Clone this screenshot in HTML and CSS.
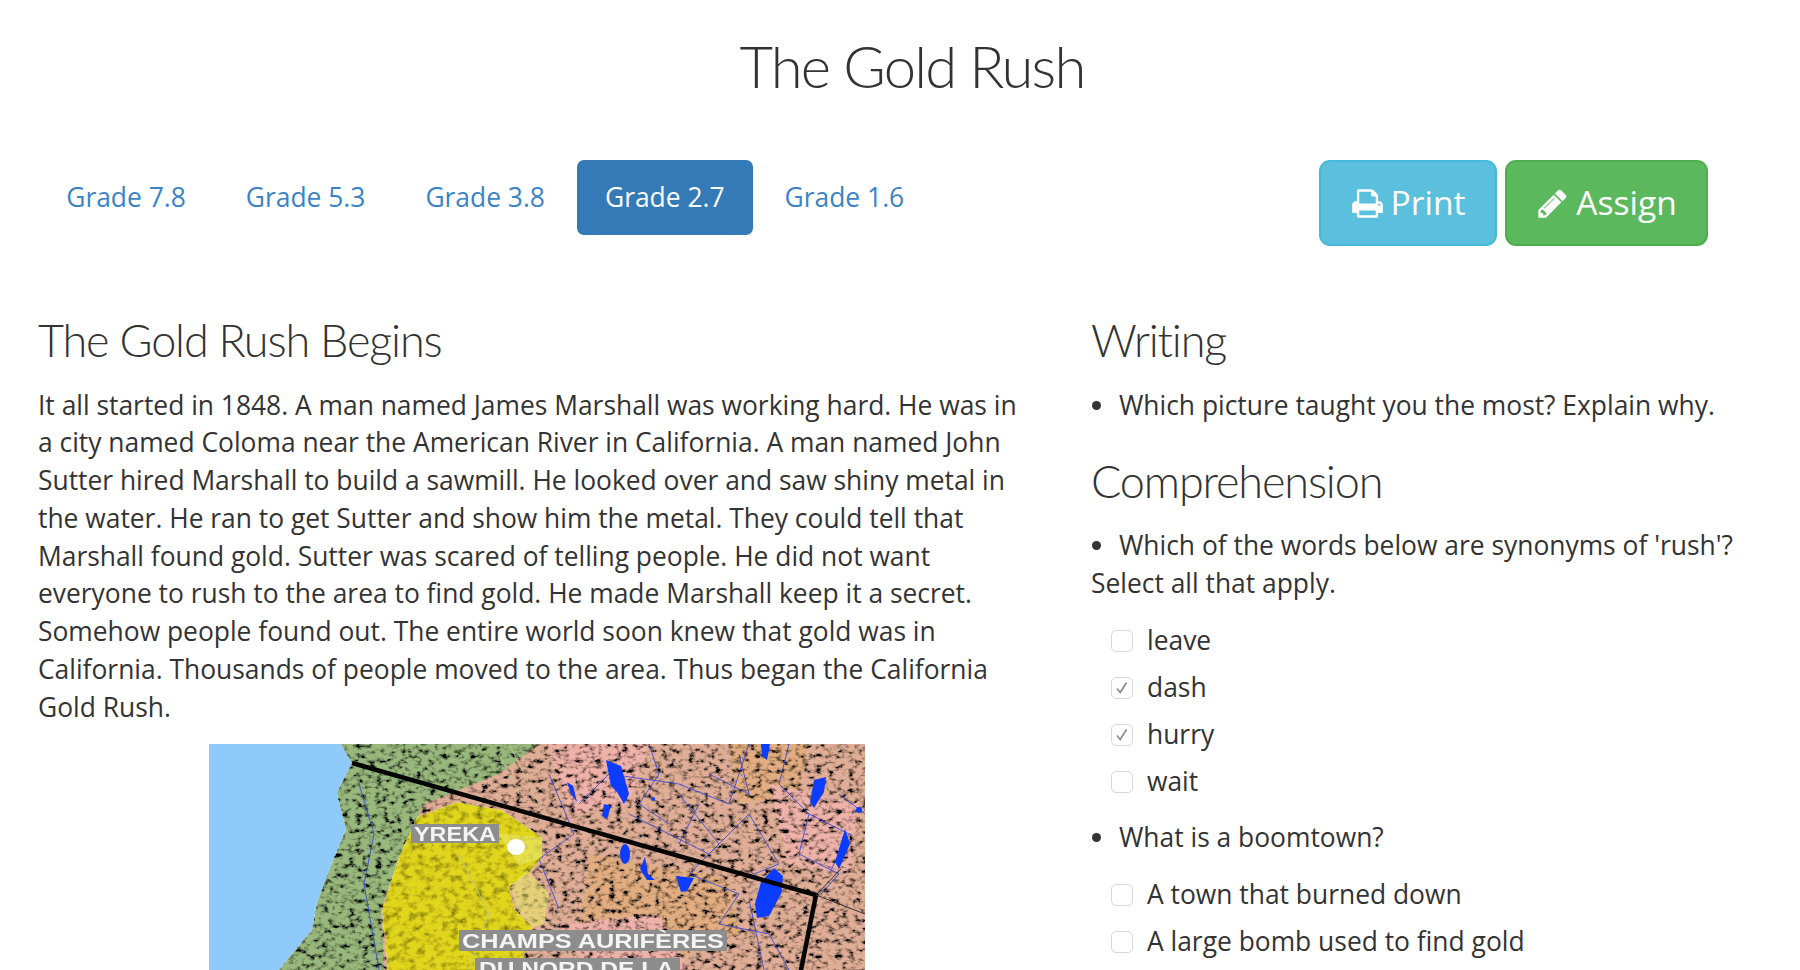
FILE: index.html
```html
<!DOCTYPE html>
<html lang="en">
<head>
<meta charset="utf-8">
<title>The Gold Rush</title>
<link rel="stylesheet" href="styles.css">
</head>
<body>
<div class="page">
  <h1 class="title">The Gold Rush</h1>
  <div class="toolbar">
    <nav class="pills">
      <a class="pill">Grade 7.8</a>
      <a class="pill">Grade 5.3</a>
      <a class="pill">Grade 3.8</a>
      <a class="pill active">Grade 2.7</a>
      <a class="pill">Grade 1.6</a>
    </nav>
    <div class="actions">
      <a class="btn btn-print"><svg class="icon" viewBox="0 0 1792 1792"><path fill="currentColor" d="M448 1536h896v-256h-896v256zm0-640h896v-384h-160q-40 0-68-28t-28-68v-160h-640v640zm1152 64q0-26-19-45t-45-19-45 19-19 45 19 45 45 19 45-19 19-45zm128 0v416q0 13-9.5 22.5t-22.5 9.5h-224v160q0 40-28 68t-68 28h-960q-40 0-68-28t-28-68v-160h-224q-13 0-22.5-9.5t-9.5-22.5v-416q0-79 56.5-135.5t135.5-56.5h64v-544q0-40 28-68t68-28h672q40 0 88 20t76 48l152 152q28 28 48 76t20 88v256h64q79 0 135.5 56.5t56.5 135.5z"/></svg>Print</a>
      <a class="btn btn-assign"><svg class="icon" viewBox="0 0 1792 1792"><path fill="currentColor" d="M491 1536l91-91-235-235-91 91v107h128v128h107zm523-928q0-22-22-22-10 0-17 7l-542 542q-7 7-7 17 0 22 22 22 10 0 17-7l542-542q7-7 7-17zm-54-192l416 416-832 832h-416v-416zm683 96q0 53-37 90l-166 166-416-416 166-165q36-38 90-38 53 0 91 38l235 234q37 39 37 91z"/></svg>Assign</a>
    </div>
  </div>
  <main class="columns">
    <section class="story">
      <h2>The Gold Rush Begins</h2>
      <p>It all started in 1848. A man named James Marshall was working hard. He was in a city named Coloma near the American River in California. A man named John Sutter hired Marshall to build a sawmill. He looked over and saw shiny metal in the water. He ran to get Sutter and show him the metal. They could tell that Marshall found gold. Sutter was scared of telling people. He did not want everyone to rush to the area to find gold. He made Marshall keep it a secret. Somehow people found out. The entire world soon knew that gold was in California. Thousands of people moved to the area. Thus began the California Gold Rush.</p>
      <svg class="map" viewBox="0 0 656 300" role="img" aria-label="Map of the northern California gold fields">
        <defs>
          <filter id="relief" x="0" y="0" width="100%" height="100%">
            <feTurbulence type="fractalNoise" baseFrequency="0.15 0.2" numOctaves="3" seed="11" result="n"/>
            <feColorMatrix in="n" type="matrix" values="3.4 0 0 0 -0.85  3.4 0 0 0 -0.85  3.4 0 0 0 -0.85  0 0 0 0 1" result="g"/>
            <feBlend in="SourceGraphic" in2="g" mode="multiply" result="m"/>
            <feComposite in="m" in2="SourceGraphic" operator="in"/>
          </filter>
          <filter id="goldtex" x="0" y="0" width="100%" height="100%">
            <feTurbulence type="fractalNoise" baseFrequency="0.12 0.16" numOctaves="3" seed="4" result="n"/>
            <feColorMatrix in="n" type="matrix" values="1.8 0 0 0 0  1.8 0 0 0 0  1.8 0 0 0 0  0 0 0 0 1" result="g"/>
            <feBlend in="SourceGraphic" in2="g" mode="multiply" result="m"/>
            <feComposite in="m" in2="SourceGraphic" operator="in"/>
          </filter>
          <filter id="softer" x="-5%" y="-5%" width="110%" height="110%"><feGaussianBlur stdDeviation="0.4"/></filter>
        </defs>
        <rect class="sea" width="656" height="300"/>
        <g filter="url(#relief)">
          <path class="land" d="M132 0L143 19L128 49L137 86L123 119L108 159L103 186L70 226L50 300H656V0Z"/>
          <path class="land-green" d="M132 0L143 19L128 49L137 86L123 119L108 159L103 186L70 226L50 300H180L172 166L190 113L215 60L290 30L330 0Z"/>
          <path class="land-sand" d="M380 110L520 135L530 190L440 226L370 200Z"/>
          <path class="land-sand" d="M520 0L600 0L590 50L530 60Z"/>
          <path class="land-pink" d="M340 0H440L420 60L360 70Z"/>
          <path class="land-pink" d="M560 40L650 60L640 130L580 120Z"/>
          <path class="land-pink" d="M350 180L450 170L480 226L380 226Z"/>
        </g>
        <g filter="url(#goldtex)">
          <path class="gold" d="M248 58L293 66L333 93L333 113L320 129L300 143L306 166L324 183L310 226V300H186L173 166L190 113L208 73Z"/>
        </g>
        <path class="gold-light" d="M318 126L340 150L335 180L324 183L308 166L302 143Z"/>
        <path class="gold-light" d="M290 90L333 93L333 113L310 122Z"/>
        <g class="rivers" filter="url(#softer)">
          <path d="M150 40L165 90L155 140L170 226"/>
          <path d="M370 60L400 30L470 40L520 60L540 0"/>
          <path d="M340 30L365 90L330 115L350 165"/>
          <path d="M470 50L510 100L480 130L530 150L510 180L560 190"/>
          <path d="M420 70L470 95L500 110L540 70L570 120L545 130"/>
          <path d="M580 0L570 40L600 70L590 110L630 130L612 150"/>
          <path d="M630 50L656 70M600 70L640 90L620 130"/>
          <path d="M560 190L580 226M540 155L555 226"/>
          <path d="M500 30L540 50L530 10M490 60L470 100"/>
          <path d="M440 0L450 30L430 60L460 80"/>
        </g>
        <path class="river-pale" d="M250 110L280 170L260 226M300 0L330 60M290 10L310 50"/>
        <g class="lakes">
          <path d="M397 16L412 22L420 50L415 60L408 48L402 42Z"/>
          <path d="M601 58L605 36L617 33L615 48L605 64Z"/>
          <ellipse cx="416" cy="110" rx="5" ry="10"/>
          <path d="M431 125L436 113L439 130L446 136L438 136Z"/>
          <path d="M467 132L485 134L478 147L472 148Z"/>
          <path d="M546 160L552 138L565 124L574 132L572 150L560 172L548 174Z"/>
          <path d="M552 0H561L558 16L553 12Z"/>
          <path d="M636 85L641 100L630 125L626 118Z"/>
          <circle cx="650" cy="66" r="3"/>
          <circle cx="444" cy="55" r="2"/>
          <path d="M358 38L364 42L368 58L362 50Z"/>
          <path d="M395 60L402 62L398 75L393 72Z"/>
        </g>
        <path class="border" d="M143 19L607 151L592 226L580 300"/>
        <path class="border-thin" d="M607 151L656 170M607 151L632 125"/>
        <ellipse class="dot" cx="307" cy="103" rx="9" ry="8"/>
        <rect class="label-bg" x="202" y="80" width="88" height="19"/>
        <text class="map-label" x="205" y="97" textLength="82" lengthAdjust="spacingAndGlyphs">YREKA</text>
        <rect class="label-bg" x="250" y="186" width="268" height="21"/>
        <text class="map-label" x="253" y="204" textLength="262" lengthAdjust="spacingAndGlyphs">CHAMPS AURIFÈRES</text>
        <rect class="label-bg" x="266" y="214" width="205" height="21"/>
        <text class="map-label" x="270" y="232" textLength="195" lengthAdjust="spacingAndGlyphs">DU NORD DE LA</text>
      </svg>
    </section>
    <aside class="questions">
      <h2>Writing</h2>
      <ul class="prompt"><li>Which picture taught you the most? Explain why.</li></ul>
      <h2>Comprehension</h2>
      <ul class="prompt"><li>Which of the words below are synonyms of 'rush'? Select all that apply.</li></ul>
      <div class="options">
        <label class="option"><span class="box"></span>leave</label>
        <label class="option"><span class="box"><svg class="tick" viewBox="0 0 22 22"><path d="M5.5 11.5L9 16L16 5"/></svg></span>dash</label>
        <label class="option"><span class="box"><svg class="tick" viewBox="0 0 22 22"><path d="M5.5 11.5L9 16L16 5"/></svg></span>hurry</label>
        <label class="option"><span class="box"></span>wait</label>
      </div>
      <ul class="prompt"><li>What is a boomtown?</li></ul>
      <div class="options">
        <label class="option"><span class="box"></span>A town that burned down</label>
        <label class="option"><span class="box"></span>A large bomb used to find gold</label>
      </div>
    </aside>
  </main>
</div>
</body>
</html>
```
FILE: styles.css
```css
* { box-sizing: border-box; }
html, body { margin: 0; padding: 0; background: #fff; }
body {
  height: 970px;
  overflow: hidden;
  font-family: "Open Sans", sans-serif;
  font-size: 26.4px;
  line-height: 37.8px;
  color: #333;
}
.page { padding: 0 38px; }
.title {
  margin: 0;
  padding-top: 28px;
  padding-left: 24px;
  text-align: center;
  font-family: Lato, sans-serif;
  font-weight: 300;
  font-size: 58px;
  line-height: 76px;
  letter-spacing: -1.8px;
  color: #333;
}
.toolbar {
  display: flex;
  justify-content: space-between;
  align-items: flex-start;
  margin-top: 56px;
  padding-right: 54px;
}
.pills { display: flex; gap: 3.6px; }
.pill {
  display: block;
  width: 176px;
  height: 75px;
  padding-top: 19px;
  text-align: center;
  border-radius: 7px;
  color: #3a84c6;
}
.pill.active { background: #337ab7; color: #fff; }
.actions { display: flex; gap: 8px; }
.btn {
  display: flex;
  align-items: center;
  justify-content: center;
  gap: 7px;
  height: 86px;
  border: 2px solid;
  border-radius: 11px;
  color: #fff;
  font-size: 33.6px;
}
.btn-print { width: 178px; background: #5bc0de; border-color: #46b8da; }
.btn-assign { width: 203px; background: #5cb85c; border-color: #4cae4c; }
.icon { width: 33px; height: 33px; }
.columns {
  display: grid;
  grid-template-columns: 990px 670px;
  column-gap: 63px;
  margin-top: 64px;
}
h2 {
  margin: 0;
  font-family: Lato, sans-serif;
  font-weight: 300;
  font-size: 45px;
  line-height: 60px;
  letter-spacing: -1.15px;
  color: #333;
}
.story p { margin: 16.5px 0 17px; }
.map { display: block; width: 656px; height: 300px; margin-left: 171px; }
.sea { fill: #8ecbfb; }
.land { fill: #e0ae96; }
.land-green { fill: #98b87c; }
.land-sand { fill: #e2ad80; }
.land-pink { fill: #eeb2a8; }
.gold { fill: #e2d61c; }
.gold-light { fill: #e9e66a; opacity: .6; }
.rivers path { fill: none; stroke: #2a3fe0; stroke-width: 1; opacity: .8; }
.river-pale { fill: none; stroke: #b8c48a; stroke-width: 1; }
.lakes { fill: #0b3cff; }
.border { fill: none; stroke: #050505; stroke-width: 4.5; }
.border-thin { fill: none; stroke: #333; stroke-width: 1; }
.dot { fill: #fff; }
.label-bg { fill: #8d8d8d; }
.map-label {
  font-family: "Liberation Sans", sans-serif;
  font-weight: 700;
  font-size: 21px;
  fill: #f4f4f4;
}
.prompt { margin: 16.5px 0 15.7px; padding: 0; list-style: none; }
.prompt li { position: relative; text-indent: 28px; }
.prompt li::before {
  content: "";
  position: absolute;
  left: 1px;
  top: 14px;
  width: 9px;
  height: 9px;
  border-radius: 50%;
  background: #333;
}
.prompt + h2 { margin-top: 26.5px; }
.options { display: flex; flex-direction: column; gap: 9.3px; padding: 3.5px 0 1.5px 20px; }
.option { display: flex; align-items: center; gap: 14px; }
.box {
  display: block;
  width: 22px;
  height: 22px;
  border: 1px solid #d8d8d8;
  border-radius: 5px;
  background: #fff;
  box-shadow: inset 0 0 1px #eee;
}
.tick { display: block; width: 20px; height: 20px; }
.tick path { fill: none; stroke: #8f8f8f; stroke-width: 2; }
```
